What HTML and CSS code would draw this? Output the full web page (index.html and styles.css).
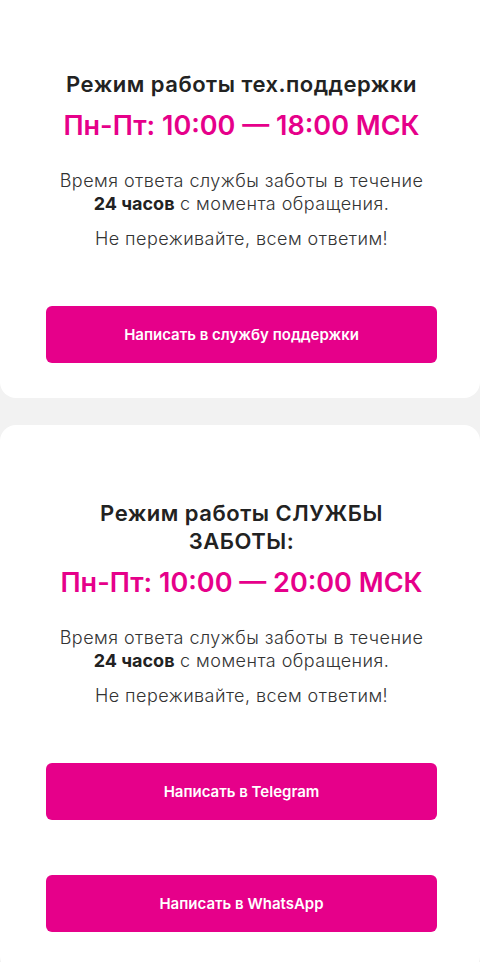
FILE: index.html
```html
<!DOCTYPE html>
<html lang="ru">
<head>
<meta charset="utf-8">
<title>Поддержка</title>
<link rel="stylesheet" href="styles.css">
</head>
<body>
<div class="page">
  <section class="card card-first">
    <h2 class="title">Режим работы тех.поддержки</h2>
    <div class="hours">Пн-Пт: 10:00 — 18:00 МСК</div>
    <p class="text">Время ответа службы заботы в течение<br><b>24 часов</b> с момента обращения.</p>
    <p class="text">Не переживайте, всем ответим!</p>
    <div class="buttons">
      <a class="btn" href="#">Написать в службу поддержки</a>
    </div>
  </section>
  <section class="card card-second">
    <h2 class="title">Режим работы СЛУЖБЫ<br>ЗАБОТЫ:</h2>
    <div class="hours">Пн-Пт: 10:00 — 20:00 МСК</div>
    <p class="text">Время ответа службы заботы в течение<br><b>24 часов</b> с момента обращения.</p>
    <p class="text">Не переживайте, всем ответим!</p>
    <div class="buttons">
      <a class="btn" href="#">Написать в Telegram</a>
      <a class="btn" href="#">Написать в WhatsApp</a>
    </div>
  </section>
</div>
</body>
</html>
```
FILE: styles.css
```css
html, body {
  margin: 0;
  padding: 0;
  background: #f2f2f2;
  font-family: Inter, "Noto Sans", sans-serif;
  color: #222;
}
.page {
  display: flex;
  flex-direction: column;
  gap: 27px;
}
.card {
  background: #fff;
  border-radius: 16px;
  padding: 70px 43px 35px 46px;
  display: flex;
  flex-direction: column;
  align-items: center;
  text-align: center;
}
.card-first {
  border-top-left-radius: 0;
  border-top-right-radius: 0;
}
.card-second {
  padding-top: 74px;
  padding-bottom: 40px;
}
.title {
  margin: 0;
  font-size: 22px;
  line-height: 28px;
  font-weight: 600;
  letter-spacing: 0.5px;
  color: #222;
}
.hours {
  margin-top: 11px;
  font-size: 27px;
  line-height: 34px;
  font-weight: 600;
  color: #e6008a;
}
.text {
  margin: 0;
  font-size: 18px;
  line-height: 23px;
  font-weight: 300;
  letter-spacing: 0.45px;
  color: #333;
}
.hours + .text {
  margin-top: 26px;
}
.text + .text {
  margin-top: 12px;
}
.text b {
  font-weight: 700;
  letter-spacing: 0;
  color: #222;
}
.buttons {
  align-self: stretch;
  display: flex;
  flex-direction: column;
  gap: 55px;
  margin-top: 56px;
}
.btn {
  display: flex;
  align-items: center;
  justify-content: center;
  height: 57px;
  background: #e6008a;
  border-radius: 6px;
  color: #fff;
  text-decoration: none;
  font-size: 15px;
  font-weight: 600;
}
```
